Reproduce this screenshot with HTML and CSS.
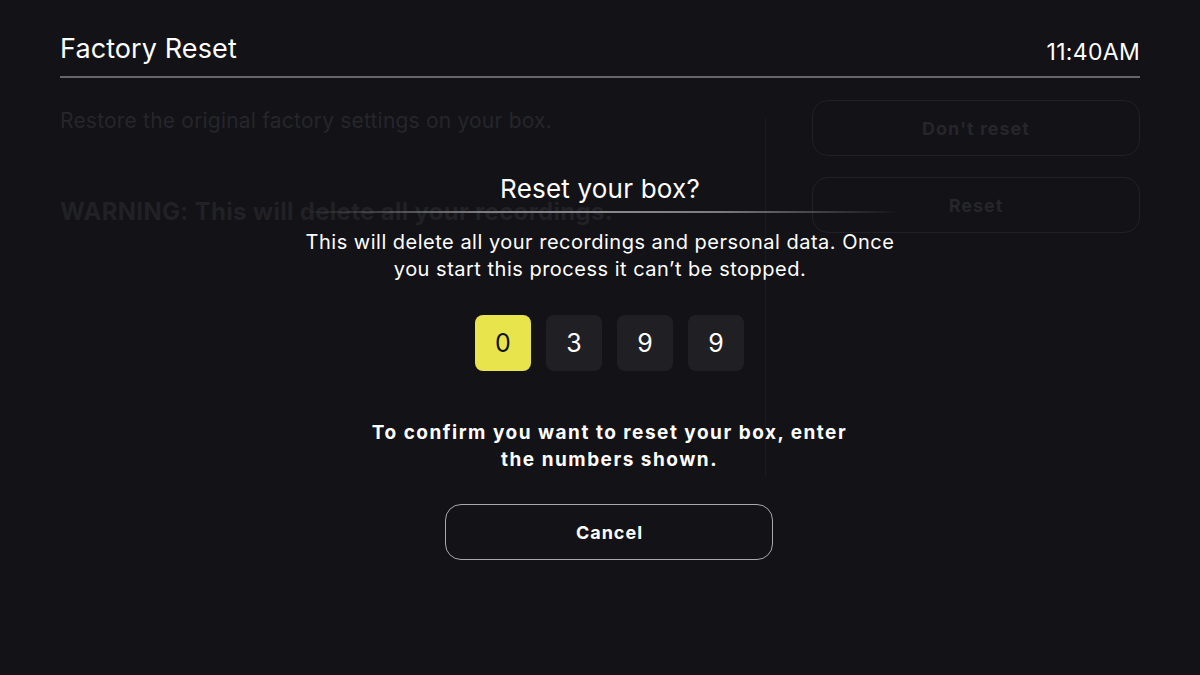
FILE: index.html
```html
<!DOCTYPE html>
<html lang="en">

<head>
    <meta charset="UTF-8">
    <meta name="viewport" content="width=device-width, initial-scale=1.0">
    <title>Factory Reset</title>
    <link rel="stylesheet" href="styles.css">
</head>

<body>

    <div class="screen">
        <div class="header">
            <h1>Factory Reset</h1>
            <span class="clock">11:40AM</span>
        </div>

        <div class="page">
            <div class="info">
                <p class="intro">Restore the original factory settings on your box.</p>
                <p class="warning">WARNING: This will delete all your recordings.</p>
            </div>
            <div class="divider"></div>
            <div class="actions">
                <button class="ghost-btn">Don't reset</button>
                <button class="ghost-btn">Reset</button>
            </div>
        </div>

        <div class="overlay">
            <div class="dialog">
                <h2>Reset your box?</h2>
                <div class="dialog-rule"></div>
                <p class="dialog-text">This will delete all your recordings and personal data. Once<br>you start this process it can’t be stopped.</p>

                <div class="dialog-lower">
                    <div class="pin">
                        <span class="digit active">0</span>
                        <span class="digit">3</span>
                        <span class="digit">9</span>
                        <span class="digit">9</span>
                    </div>

                    <p class="confirm">To confirm you want to reset your box, enter<br>the numbers shown.</p>

                    <button class="cancel-btn">Cancel</button>
                </div>
            </div>
        </div>
    </div>

</body>

</html>
```

FILE: styles.css
```css
body {
    margin: 0;
    font-family: 'Inter', 'Noto Sans', sans-serif;
    background-color: #121217;
    color: #fff;
}

.screen {
    width: 1200px;
    height: 675px;
    position: relative;
    overflow: hidden;
}

.header {
    margin: 0 60px;
    height: 78px;
    display: flex;
    justify-content: space-between;
    align-items: flex-end;
    border-bottom: 2px solid #66666a;
    box-sizing: border-box;
}

.header h1 {
    margin: 0 0 11px;
    font-size: 27px;
    font-weight: 400;
    letter-spacing: 0.1px;
}

.clock {
    font-size: 23px;
    letter-spacing: 0.3px;
    margin-bottom: 10px;
}

.page {
    margin: 0 60px;
    display: flex;
}

.info {
    flex: 1;
    padding-top: 30px;
}

.intro {
    margin: 0;
    font-size: 21px;
    letter-spacing: 0.2px;
    color: #26262b;
}

.warning {
    margin: 64px 0 0;
    font-size: 24px;
    font-weight: 700;
    letter-spacing: 0.3px;
    color: #212126;
}

.divider {
    width: 1px;
    margin: 40px 46px 0 0;
    height: 360px;
    background-color: #1a1a1f;
}

.actions {
    width: 328px;
    padding-top: 22px;
    display: flex;
    flex-direction: column;
    gap: 21px;
}

.ghost-btn {
    height: 56px;
    background: transparent;
    border: 1px solid #202025;
    border-radius: 16px;
    font-family: inherit;
    font-size: 18px;
    font-weight: 700;
    letter-spacing: 1px;
    color: #26262b;
}

.overlay {
    position: absolute;
    left: 0;
    top: 0;
    width: 100%;
    height: 100%;
}

.dialog {
    display: flex;
    flex-direction: column;
    align-items: center;
    padding-top: 171px;
}

.dialog h2 {
    margin: 0;
    font-size: 26px;
    font-weight: 400;
    letter-spacing: 0.2px;
    line-height: 36px;
}

.dialog-rule {
    width: 600px;
    height: 2px;
    margin-top: 4px;
    background: linear-gradient(90deg, rgba(120, 120, 125, 0) 0%, #7a7a7f 30%, #8a8a8e 50%, #7a7a7f 70%, rgba(120, 120, 125, 0) 100%);
}

.dialog-text {
    margin: 16px 0 0;
    font-size: 20px;
    letter-spacing: 0.5px;
    line-height: 27px;
    text-align: center;
}

.dialog-lower {
    display: flex;
    flex-direction: column;
    align-items: center;
    padding-left: 19px;
}

.pin {
    display: flex;
    gap: 15px;
    margin-top: 32px;
}

.digit {
    width: 56px;
    height: 56px;
    border-radius: 8px;
    background-color: #1f1f24;
    display: flex;
    align-items: center;
    justify-content: center;
    font-size: 25px;
}

.digit.active {
    background-color: #e8e54c;
    color: #121217;
}

.confirm {
    margin: 48px 0 0;
    font-size: 19px;
    font-weight: 700;
    line-height: 27px;
    letter-spacing: 1.5px;
    text-align: center;
}

.cancel-btn {
    margin-top: 31px;
    width: 328px;
    height: 56px;
    background: transparent;
    border: 1px solid #a9a9ad;
    border-radius: 16px;
    color: #fff;
    font-family: inherit;
    font-size: 18px;
    font-weight: 700;
    letter-spacing: 1px;
}
```
